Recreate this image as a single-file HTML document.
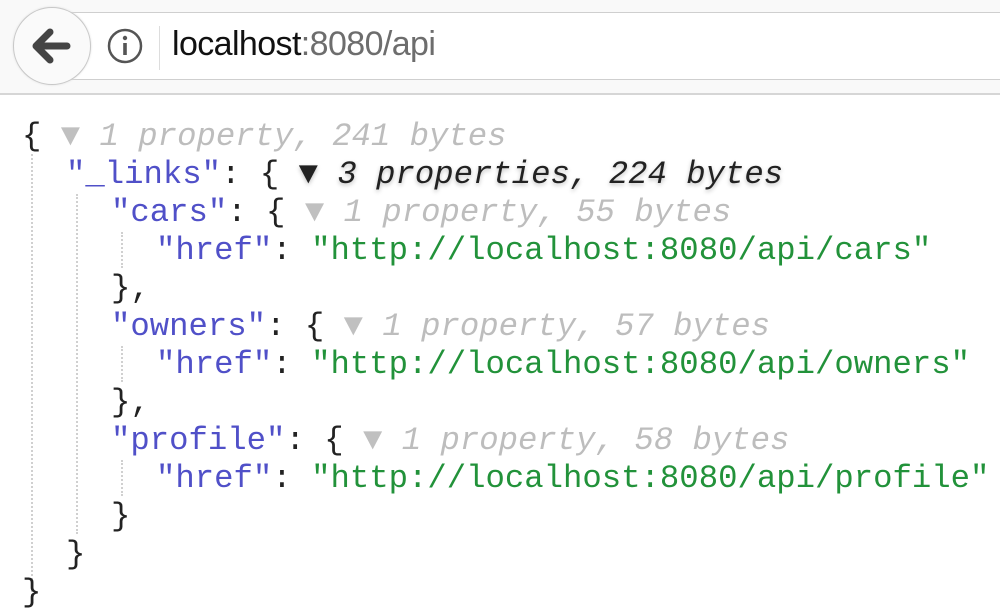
<!DOCTYPE html>
<html><head><meta charset="utf-8"><style>
body{margin:0;width:1000px;height:614px;background:#fff;overflow:hidden;position:relative;font-family:"Liberation Mono",monospace}
.top{position:absolute;left:0;top:0;width:1000px;height:93px;background:#f9f9f9;border-bottom:2px solid #d6d6d6}
.field{position:absolute;left:40px;top:12px;width:970px;height:66px;background:#fff;border:1px solid #cfcfcf;border-radius:3px}
.back{position:absolute;left:13px;top:7px;width:76px;height:76px;border-radius:50%;background:#fafafa;border:1px solid #c8c8c8;box-shadow:0 0 2px #ddd}
.url{position:absolute;left:172px;top:25px;font-family:"Liberation Sans",sans-serif;font-size:34px;color:#111;letter-spacing:-0.6px}
.url span{color:#6d6d6d}
.l{position:absolute;font-size:32.3px;line-height:38px;white-space:pre;color:#222}
.k{color:#5050c8}.s{color:#22923a}.g{color:#bdbdbd;font-style:italic}.t{color:#c0c0c0;font-style:normal}
.b{color:#222;font-style:italic;text-shadow:0 2px 4px rgba(0,0,0,.25)}
.v{position:absolute;width:0;border-left:2px dotted #d0d0d0}
</style></head><body>
<div class="top">
<div class="field"></div>
<div class="back"></div>
<svg style="position:absolute;left:27px;top:23px" width="46" height="46" viewBox="0 0 46 46"><path d="M40 23H12M23 9L9 23L23 37" fill="none" stroke="#444" stroke-width="7" stroke-linecap="round" stroke-linejoin="round"/></svg>
<svg style="position:absolute;left:106px;top:27px" width="38" height="38" viewBox="0 0 38 38"><circle cx="19" cy="19" r="16" fill="none" stroke="#555" stroke-width="2.5"/><circle cx="19" cy="11" r="2.2" fill="#555"/><rect x="17.2" y="16" width="3.6" height="12" fill="#555"/></svg>
<div style="position:absolute;left:159px;top:26px;width:1px;height:44px;background:#ddd"></div>
<div class="url">localhost<span>:8080/api</span></div>
</div>
<div class="v" style="left:31px;top:154px;height:450px"></div>
<div class="v" style="left:76px;top:194px;height:340px"></div>
<div class="v" style="left:121px;top:232px;height:36px"></div>
<div class="v" style="left:121px;top:346px;height:36px"></div>
<div class="v" style="left:121px;top:460px;height:36px"></div>
<div class="l" style="left:22px;top:118px">{ <span class="g"><span class="t">▼</span> 1 property, 241 bytes</span></div>
<div class="l" style="left:66px;top:156px"><span class="k">"_links"</span>: { <span class="b"><span style="font-style:normal">▼</span> 3 properties, 224 bytes</span></div>
<div class="l" style="left:111px;top:194px"><span class="k">"cars"</span>: { <span class="g"><span class="t">▼</span> 1 property, 55 bytes</span></div>
<div class="l" style="left:156px;top:232px"><span class="k">"href"</span>: <span class="s">"http://localhost:8080/api/cars"</span></div>
<div class="l" style="left:111px;top:270px">},</div>
<div class="l" style="left:111px;top:308px"><span class="k">"owners"</span>: { <span class="g"><span class="t">▼</span> 1 property, 57 bytes</span></div>
<div class="l" style="left:156px;top:346px"><span class="k">"href"</span>: <span class="s">"http://localhost:8080/api/owners"</span></div>
<div class="l" style="left:111px;top:384px">},</div>
<div class="l" style="left:111px;top:422px"><span class="k">"profile"</span>: { <span class="g"><span class="t">▼</span> 1 property, 58 bytes</span></div>
<div class="l" style="left:156px;top:460px"><span class="k">"href"</span>: <span class="s">"http://localhost:8080/api/profile"</span></div>
<div class="l" style="left:111px;top:498px">}</div>
<div class="l" style="left:66px;top:536px">}</div>
<div class="l" style="left:22px;top:574px">}</div>
</body></html>
